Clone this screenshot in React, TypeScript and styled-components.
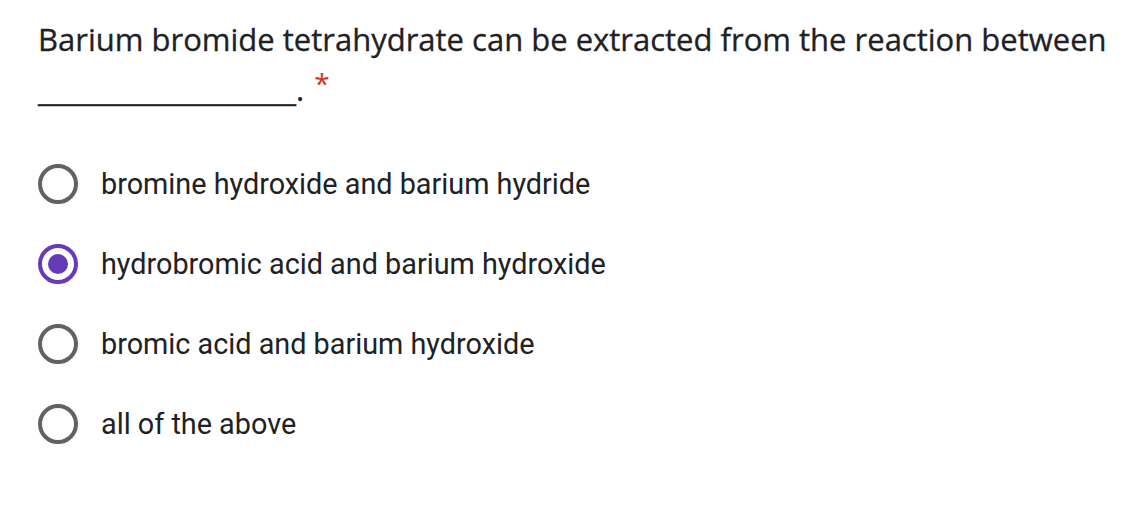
import React, { FC, useState } from 'react';
import styled, { createGlobalStyle } from 'styled-components';

const GlobalStyle = createGlobalStyle`
    body {
        margin: 0;
        background: #fff;
        color: #202124;
    }
`;

const Page = styled.div`
    padding: 14px 0 0 38px;
`;

const Title = styled.div`
    font-family: "Open Sans", Roboto, sans-serif;
    font-size: 31px;
    line-height: 50px;
    color: #202124;
    -webkit-text-stroke: 0.3px #202124;
`;

const Required = styled.span`
    color: #d93025;
    margin-left: 10px;
    font-size: 28px;
    vertical-align: top;
    position: relative;
    top: -6px;
    -webkit-text-stroke: 0;
`;

const Options = styled.div`
    margin-top: 50px;
    display: flex;
    flex-direction: column;
    gap: 40px;
`;

const Option = styled.label`
    display: flex;
    align-items: center;
    gap: 23px;
    height: 40px;
    cursor: pointer;
    font-family: Roboto, "Liberation Sans", sans-serif;
    font-size: 28.8px;
    color: #202124;
`;

const Radio = styled.span<{ $checked: boolean }>`
    box-sizing: border-box;
    width: 40px;
    height: 40px;
    border-radius: 50%;
    border: 4px solid ${(p) => (p.$checked ? '#673ab7' : '#5f6368')};
    display: flex;
    align-items: center;
    justify-content: center;
    flex-shrink: 0;

    &::after {
        content: '';
        width: 20px;
        height: 20px;
        border-radius: 50%;
        background: #673ab7;
        display: ${(p) => (p.$checked ? 'block' : 'none')};
    }
`;

const answers = [
    'bromine hydroxide and barium hydride',
    'hydrobromic acid and barium hydroxide',
    'bromic acid and barium hydroxide',
    'all of the above',
];

const App: FC = () => {
    const [selected, setSelected] = useState(1);

    return (
        <>
            <GlobalStyle />
            <Page>
                <Title>
                    Barium bromide tetrahydrate can be extracted from the reaction between
                    <br />
                    ___________________.<Required>*</Required>
                </Title>
                <Options>
                    {answers.map((a, i) => (
                        <Option key={a} onClick={() => setSelected(i)}>
                            <Radio $checked={selected === i} />
                            {a}
                        </Option>
                    ))}
                </Options>
            </Page>
        </>
    );
};

export default App;
